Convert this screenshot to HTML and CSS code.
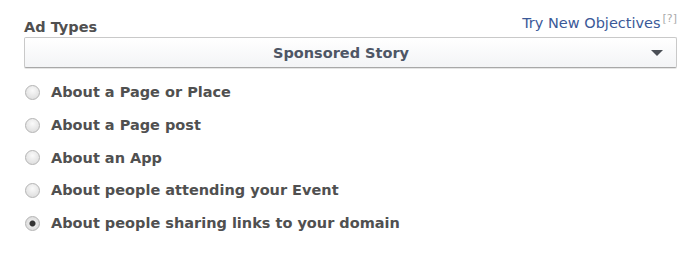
FILE: index.html
```html
<!DOCTYPE html>
<html lang="en">
<head>
    <meta charset="UTF-8">
    <title>Ad Types</title>
    <link rel="stylesheet" href="styles.css">
</head>
<body>
    <div id="container">
        <div class="header-row">
            <label class="section-label">Ad Types</label>
            <span class="objectives"><a href="#">Try New Objectives</a><span class="help">[?]</span></span>
        </div>
        <div class="select-box">
            <span class="select-text">Sponsored Story</span>
            <span class="select-arrow"></span>
        </div>
        <div class="radio-list">
            <label class="radio-row"><input type="radio" name="ad_type"> About a Page or Place</label>
            <label class="radio-row"><input type="radio" name="ad_type"> About a Page post</label>
            <label class="radio-row"><input type="radio" name="ad_type"> About an App</label>
            <label class="radio-row"><input type="radio" name="ad_type"> About people attending your Event</label>
            <label class="radio-row"><input type="radio" name="ad_type" checked> About people sharing links to your domain</label>
        </div>
    </div>
</body>
</html>
```

FILE: styles.css
```css
body {
    margin: 0;
    padding: 0;
    background-color: #fff;
    font-family: "DejaVu Sans", Verdana, sans-serif;
}

#container {
    width: 653px;
    padding: 12px 0 0 24px;
}

.header-row {
    display: flex;
    justify-content: space-between;
    align-items: flex-end;
    height: 25px;
}

.section-label {
    font-size: 14.5px;
    font-weight: bold;
    color: #505050;
    line-height: 20px;
}

.objectives {
    font-size: 14.5px;
    line-height: 20px;
    position: relative;
    top: -4px;
}

.objectives a {
    color: #3b5998;
    text-decoration: none;
}

.help {
    font-size: 11px;
    color: #aaa;
    vertical-align: top;
    position: relative;
    top: -4px;
    margin-left: 2px;
}

.select-box {
    display: flex;
    align-items: center;
    height: 29px;
    border: 1px solid #c9c9c9;
    border-bottom-color: #a8a8a8;
    border-radius: 2px;
    background: linear-gradient(#fff, #f3f4f6);
    box-shadow: 0 1px 0 #e5e5e5;
}

.select-text {
    flex: 1;
    text-align: center;
    font-size: 14.5px;
    font-weight: bold;
    color: #4e5665;
    padding-left: 6px;
}

.select-arrow {
    width: 0;
    height: 0;
    border-left: 6px solid transparent;
    border-right: 6px solid transparent;
    border-top: 6px solid #4b4f56;
    margin-right: 13px;
}

.radio-list {
    padding-top: 8px;
}

.radio-row {
    display: flex;
    align-items: center;
    height: 32.7px;
    font-size: 14.5px;
    font-weight: bold;
    color: #505050;
}

.radio-row input {
    appearance: none;
    width: 15px;
    height: 15px;
    margin: 0 11px 0 1px;
    border: 1px solid #b4b4b4;
    border-radius: 50%;
    background: radial-gradient(circle at 50% 35%, #fafafa, #d8d8d8);
}

.radio-row input:checked {
    background: radial-gradient(circle, #333 0, #333 2.5px, #e8e8e8 3.5px, #d4d4d4 100%);
}
```
